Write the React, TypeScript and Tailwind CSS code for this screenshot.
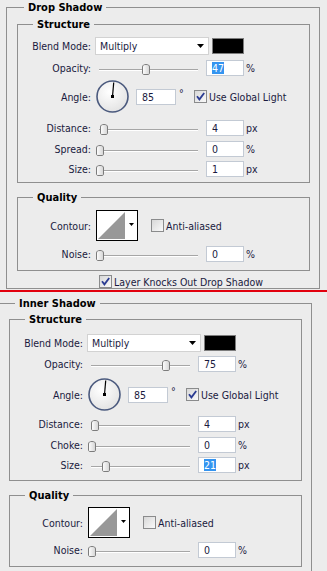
import React from "react";

const LABEL = "text-[10.5px] leading-[12px] text-[#1a1a3e] whitespace-nowrap";
const LEGEND = "px-[4px] text-[11px] font-bold leading-[15px] text-black";
const BOX = "border border-[#8f8f8f]";

function Checkbox({ checked }: { checked: boolean }) {
  return (
    <svg width="13" height="13" viewBox="0 0 13 13" className="block shrink-0">
      <defs>
        <linearGradient id="cbg" x1="0" y1="0" x2="1" y2="1">
          <stop offset="0" stopColor="#d6d6d6" />
          <stop offset="1" stopColor="#fbfbfb" />
        </linearGradient>
      </defs>
      <rect x="0.5" y="0.5" width="12" height="12" fill="url(#cbg)" stroke="#8a8b8c" />
      {checked && (
        <path d="M3 6.3 L5.4 9.4 L10.2 3" fill="none" stroke="#2b3c92" strokeWidth="1.8" />
      )}
    </svg>
  );
}

function Thumb() {
  return (
    <svg width="8" height="11" viewBox="0 0 8 11" className="block">
      <defs>
        <linearGradient id="thg" x1="0" y1="0" x2="1" y2="0">
          <stop offset="0" stopColor="#ffffff" />
          <stop offset="1" stopColor="#d4d4d4" />
        </linearGradient>
      </defs>
      <path
        d="M0.5 3 C0.5 1.2 1.8 0.5 4 0.5 C6.2 0.5 7.5 1.2 7.5 3 L7.5 9 C7.5 10 7 10.5 6 10.5 L2 10.5 C1 10.5 0.5 10 0.5 9 Z"
        fill="url(#thg)"
        stroke="#7c7c7c"
      />
    </svg>
  );
}

function Slider({ pos }: { pos: number }) {
  return (
    <div className="relative ml-[1px] h-[16px] w-[104px] shrink-0">
      <div className="absolute left-[3px] top-[9px] h-[2px] w-[99px] border-t border-[#a6a6a6] bg-white" />
      <div className="absolute top-[4px]" style={{ left: pos }}>
        <Thumb />
      </div>
    </div>
  );
}

function Input({ value, selected, w }: { value: string; selected?: boolean; w: string }) {
  return (
    <div className={`flex h-[16px] shrink-0 items-center border border-[#c3cad4] bg-white pl-[5px] ${w}`}>
      {selected ? (
        <span className="bg-[#3494f0] text-[10.5px] leading-[12px] text-white">{value}</span>
      ) : (
        <span className={LABEL}>{value}</span>
      )}
    </div>
  );
}

function Row({
  label,
  mt,
  h,
  children,
}: {
  label: string;
  mt: string;
  h: string;
  children: React.ReactNode;
}) {
  return (
    <div className={`flex items-center ${mt} ${h}`}>
      <div className={`w-[73px] shrink-0 text-right ${LABEL}`}>{label}</div>
      <div className="ml-[4px] flex items-center">{children}</div>
    </div>
  );
}

function SliderRow({
  label,
  mt,
  pos,
  value,
  selected,
  unit,
}: {
  label: string;
  mt: string;
  pos: number;
  value: string;
  selected?: boolean;
  unit: string;
}) {
  return (
    <Row label={label} mt={mt} h="h-[16px]">
      <Slider pos={pos} />
      <div className="ml-[6px]">
        <Input value={value} selected={selected} w="w-[38px]" />
      </div>
      <span className={`ml-[2px] ${LABEL}`}>{unit}</span>
    </Row>
  );
}

function Dial() {
  const a = (85 * Math.PI) / 180;
  const x2 = 16.5 + 14 * Math.cos(a);
  const y2 = 16.5 - 14 * Math.sin(a);
  return (
    <svg width="33" height="33" viewBox="0 0 33 33" className="block">
      <defs>
        <radialGradient id="dg" cx="0.4" cy="0.35" r="0.7">
          <stop offset="0" stopColor="#ffffff" />
          <stop offset="1" stopColor="#e2e2e2" />
        </radialGradient>
      </defs>
      <circle cx="16.5" cy="16.5" r="15.5" fill="url(#dg)" stroke="#4b5a7e" strokeWidth="1.6" />
      <line x1="16.5" y1="16.5" x2={x2} y2={y2} stroke="#000" strokeWidth="1.2" />
      <rect x="15" y="15" width="3" height="3" fill="#000" />
    </svg>
  );
}

function Contour() {
  return (
    <svg width="42" height="31" viewBox="0 0 42 31" className="block">
      <rect x="0.5" y="0.5" width="41" height="30" fill="#fff" stroke="#000" />
      <polygon points="2,29 29,2 29,29" fill="#989898" />
      <path d="M33 13 H38 L35.5 16 Z" fill="#000" />
    </svg>
  );
}

type Cfg = {
  blend: string;
  opac: string;
  angle: string;
  dist: string;
  spread: string;
  size: string;
  spb: string;
  contour: string;
  noise: string;
  qpb: string;
  spreadLabel: string;
  opacPos: number;
  opacVal: string;
  opacSel?: boolean;
  distPos: number;
  sizePos: number;
  sizeVal: string;
  sizeSel?: boolean;
};

function Groups({ c }: { c: Cfg }) {
  return (
    <>
      <fieldset className={`ml-[10px] w-[293px] ${BOX} ${c.spb}`}>
        <legend className={`ml-[15px] ${LEGEND}`}>Structure</legend>
        <Row label="Blend Mode:" mt={c.blend} h="h-[18px]">
          <div className="flex h-[18px] w-[114px] items-center justify-between border border-[#d2d2d2] bg-white pl-[4px] pr-[4px]">
            <span className={LABEL}>Multiply</span>
            <svg width="7" height="4" viewBox="0 0 7 4" className="block">
              <path d="M0 0 H7 L3.5 4 Z" fill="#000" />
            </svg>
          </div>
          <div className="ml-[3px] h-[16px] w-[32px] border border-[#7d7d7d] bg-black" />
        </Row>
        <SliderRow label="Opacity:" mt={c.opac} pos={c.opacPos} value={c.opacVal} selected={c.opacSel} unit="%" />
        <Row label="Angle:" mt={c.angle} h="h-[33px]">
          <div className="ml-[1px]">
            <Dial />
          </div>
          <div className="ml-[7px]">
            <Input value="85" w="w-[40px]" />
          </div>
          <span className={`ml-[3px] mb-[7px] w-[15px] ${LABEL}`}>°</span>
          <Checkbox checked />
          <span className={`ml-[2px] ${LABEL}`}>Use Global Light</span>
        </Row>
        <SliderRow label="Distance:" mt={c.dist} pos={c.distPos} value="4" unit="px" />
        <SliderRow label={c.spreadLabel} mt={c.spread} pos={0} value="0" unit="%" />
        <SliderRow label="Size:" mt={c.size} pos={c.sizePos} value={c.sizeVal} selected={c.sizeSel} unit="px" />
      </fieldset>
      <fieldset className={`ml-[10px] mt-[7px] w-[293px] ${BOX} ${c.qpb}`}>
        <legend className={`ml-[15px] ${LEGEND}`}>Quality</legend>
        <Row label="Contour:" mt={c.contour} h="h-[31px]">
          <div className="ml-[1px]">
            <Contour />
          </div>
          <div className="ml-[13px]">
            <Checkbox checked={false} />
          </div>
          <span className={`ml-[2px] ${LABEL}`}>Anti-aliased</span>
        </Row>
        <SliderRow label="Noise:" mt={c.noise} pos={0} value="0" unit="%" />
      </fieldset>
    </>
  );
}

export default function App() {
  const top: Cfg = {
    blend: "mt-[5px]",
    opac: "mt-[5px]",
    angle: "mt-[4px]",
    dist: "mt-[7px]",
    spread: "mt-[5px]",
    size: "mt-[4px]",
    spb: "pb-[5px]",
    contour: "mt-[5px]",
    noise: "mt-[5px]",
    qpb: "pb-[8px]",
    spreadLabel: "Spread:",
    opacPos: 46,
    opacVal: "47",
    opacSel: true,
    distPos: 4,
    sizePos: 0,
    sizeVal: "1",
  };
  const bottom: Cfg = {
    blend: "mt-[7px]",
    opac: "mt-[4px]",
    angle: "mt-[6px]",
    dist: "mt-[5px]",
    spread: "mt-[5px]",
    size: "mt-[4px]",
    spb: "pb-[7px]",
    contour: "mt-[4px]",
    noise: "mt-[4px]",
    qpb: "pb-[8px]",
    spreadLabel: "Choke:",
    opacPos: 74,
    opacVal: "75",
    distPos: 3,
    sizePos: 14,
    sizeVal: "21",
    sizeSel: true,
  };
  return (
    <div className="h-[571px] w-[327px] overflow-hidden bg-[#ececec] [font-family:'DejaVu_Sans_Condensed','Liberation_Sans',sans-serif]">
      <div className="h-[290px] overflow-hidden">
        <fieldset className={`ml-[6px] w-[314px] pt-[2px] ${BOX}`}>
          <legend className={`ml-[17px] ${LEGEND}`}>Drop Shadow</legend>
          <Groups c={top} />
          <div className="mt-[4px] flex h-[13px] items-center">
            <div className="ml-[92px]">
              <Checkbox checked />
            </div>
            <span className={`ml-[2px] ${LABEL}`}>Layer Knocks Out Drop Shadow</span>
          </div>
        </fieldset>
      </div>
      <div className="h-[2px] bg-[#e2000e]" />
      <fieldset className={`-ml-[2px] mt-[4px] w-[314px] pt-[1px] pb-[30px] ${BOX}`}>
        <legend className={`ml-[16px] ${LEGEND}`}>Inner Shadow</legend>
        <Groups c={bottom} />
      </fieldset>
    </div>
  );
}
